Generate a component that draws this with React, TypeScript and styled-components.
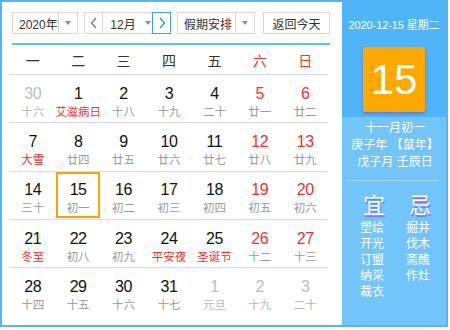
import styled, { createGlobalStyle } from 'styled-components';

const GlobalStyle = createGlobalStyle`
	html, body {
		margin: 0;
		padding: 0;
		background: #fff;
	}
	body {
		font-family: 'Liberation Sans', 'Noto Sans CJK SC', sans-serif;
	}
`;

type Day = {
	num: number;
	sub: string;
	other?: boolean;
	festival?: boolean;
	today?: boolean;
};

const d = (num: number, sub: string, extra: Partial<Day> = {}): Day => ({ num, sub, ...extra });

const weeks: Day[][] = [
	[d(30, '十六', { other: true }), d(1, '艾滋病日', { festival: true }), d(2, '十八'), d(3, '十九'), d(4, '二十'), d(5, '廿一'), d(6, '廿二')],
	[d(7, '大雪', { festival: true }), d(8, '廿四'), d(9, '廿五'), d(10, '廿六'), d(11, '廿七'), d(12, '廿八'), d(13, '廿九')],
	[d(14, '三十'), d(15, '初一', { today: true }), d(16, '初二'), d(17, '初三'), d(18, '初四'), d(19, '初五'), d(20, '初六')],
	[d(21, '冬至', { festival: true }), d(22, '初八'), d(23, '初九'), d(24, '平安夜', { festival: true }), d(25, '圣诞节', { festival: true }), d(26, '十二'), d(27, '十三')],
	[d(28, '十四'), d(29, '十五'), d(30, '十六'), d(31, '十七'), d(1, '元旦', { other: true }), d(2, '十九', { other: true }), d(3, '二十', { other: true })],
];

const weekdays = ['一', '二', '三', '四', '五', '六', '日'];
const goodList = ['塑绘', '开光', '订盟', '纳采', '裁衣'];
const badList = ['掘井', '伐木', '斋醮', '作灶'];

const Widget = styled.div`
	width: 448px;
	height: 327px;
	box-sizing: border-box;
	border: 2px solid #52b6f6;
	display: flex;
	background: #fff;
`;

const Main = styled.div`
	width: 340px;
	box-sizing: border-box;
	padding: 10px 10px 0 8px;
	display: flex;
	flex-direction: column;
`;

const Toolbar = styled.div`
	display: flex;
	align-items: center;
	height: 22px;
	margin-left: 2px;
	gap: 6px;
	font-size: 12px;
	color: #333;
	white-space: nowrap;
`;

const Select = styled.div<{ $width: number }>`
	width: ${(p) => p.$width}px;
	height: 22px;
	box-sizing: border-box;
	border: 1px solid #d8d8d8;
	display: flex;
	align-items: stretch;
	background: #fff;
`;

const SelectText = styled.span`
	flex: 1;
	display: flex;
	align-items: center;
	padding-left: 6px;
	white-space: nowrap;
`;

const Caret = styled.span`
	width: 18px;
	flex: none;
	border-left: 1px solid #d8d8d8;
	display: flex;
	align-items: center;
	justify-content: center;
	&::after {
		content: '';
		border-left: 3.5px solid transparent;
		border-right: 3.5px solid transparent;
		border-top: 4px solid #8a8a8a;
	}
`;

const MonthGroup = styled.div`
	display: flex;
	height: 22px;
`;

const NavBtn = styled.span<{ $active?: boolean }>`
	width: 19px;
	box-sizing: border-box;
	border: 1px solid ${(p) => (p.$active ? '#3f9ff2' : '#d8d8d8')};
	display: flex;
	align-items: center;
	justify-content: center;
	color: ${(p) => (p.$active ? '#2b8ef0' : '#777')};
	background: #fff;
`;

const MonthSel = styled.span`
	width: 49px;
	box-sizing: border-box;
	border-top: 1px solid #d8d8d8;
	border-bottom: 1px solid #d8d8d8;
	display: flex;
	align-items: center;
	justify-content: center;
	gap: 9px;
	padding-left: 6px;
	&::after {
		content: '';
		border-left: 3.5px solid transparent;
		border-right: 3.5px solid transparent;
		border-top: 4px solid #8a8a8a;
	}
`;

const TodayBtn = styled.span`
	width: 67px;
	height: 22px;
	box-sizing: border-box;
	border: 1px solid #d8d8d8;
	display: flex;
	align-items: center;
	justify-content: center;
	margin-left: 2px;
`;

const BlueRule = styled.div`
	height: 2px;
	background: #5cbcf7;
	margin: 9px 2px 0 2px;
`;

const Grid = styled.div`
	display: grid;
	grid-template-columns: repeat(7, 1fr);
	width: 318px;
`;

const HeadCell = styled.div<{ $weekend?: boolean }>`
	height: 29px;
	border-bottom: 1px solid #dcdcdc;
	display: flex;
	align-items: center;
	justify-content: center;
	font-size: 14px;
	color: ${(p) => (p.$weekend ? '#f23030' : '#333')};
`;

const DayCell = styled.div<{ $last: boolean }>`
	height: ${(p) => (p.$last ? 48 : 47.3)}px;
	border-bottom: ${(p) => (p.$last ? 'none' : '1px solid #dcdcdc')};
	display: flex;
	align-items: center;
	justify-content: center;
`;

const DayBox = styled.div<{ $today?: boolean }>`
	width: 44px;
	height: 46px;
	box-sizing: border-box;
	border: 2px solid ${(p) => (p.$today ? '#ffa200' : 'transparent')};
	display: flex;
	flex-direction: column;
	align-items: center;
	padding-top: 6px;
`;

const DayNum = styled.span<{ $color: string }>`
	font-size: 16px;
	line-height: 20px;
	letter-spacing: -0.4px;
	color: ${(p) => p.$color};
`;

const DaySub = styled.span<{ $color: string }>`
	font-size: 11.5px;
	line-height: 16px;
	color: ${(p) => p.$color};
	white-space: nowrap;
`;

const Side = styled.div`
	flex: 1;
	display: flex;
	flex-direction: column;
	color: #fff;
	background: #72c4f9;
`;

const SideTop = styled.div`
	height: 115px;
	background: #4fb5f6;
	display: flex;
	flex-direction: column;
	align-items: center;
	padding-top: 16px;
	box-sizing: border-box;
`;

const DateLine = styled.div`
	font-size: 11px;
	line-height: 14px;
	letter-spacing: -0.1px;
	white-space: nowrap;
`;

const BigDay = styled.div`
	width: 62px;
	height: 65px;
	margin-top: 15px;
	background: #ffa800;
	border-radius: 2px;
	box-shadow: 0 2px 3px rgba(95, 80, 210, 0.55);
	display: flex;
	align-items: center;
	justify-content: center;
	font-size: 42px;
	font-family: 'Liberation Sans', Arial, sans-serif;
`;

const Lunar = styled.div`
	display: flex;
	flex-direction: column;
	align-items: center;
	font-size: 12px;
	line-height: 17px;
	padding-top: 3px;
	margin-left: 2px;
`;

const Divider = styled.div`
	height: 1px;
	background: #a4d9fb;
	margin: 9px 7px 0 5px;
`;

const Advice = styled.div`
	display: grid;
	grid-template-columns: 46px 1fr;
	padding: 12px 0 0 18px;
`;

const AdviceCol = styled.div`
	display: flex;
	flex-direction: column;
`;

const AdviceHead = styled.div`
	font-size: 22px;
	line-height: 26px;
	text-shadow: 1px 2px 0 #7a7cf2;
	margin-left: 3px;
	margin-bottom: 1px;
`;

const AdviceItem = styled.div`
	font-size: 12px;
	line-height: 16px;
`;

const Chevron = ({ dir }: { dir: 'left' | 'right' }) => (
	<svg width="8" height="12" viewBox="0 0 8 12">
		<polyline
			points={dir === 'left' ? '6,1 1.5,6 6,11' : '2,1 6.5,6 2,11'}
			fill="none"
			stroke="currentColor"
			strokeWidth="1.3"
		/>
	</svg>
);

const numColor = (day: Day, col: number) => {
	if (day.other) return '#bdbdbd';
	if (col >= 5) return '#f23030';
	return '#111';
};

const subColor = (day: Day) => {
	if (day.other) return '#b8b8b8';
	if (day.festival) return '#f23030';
	return '#999';
};

export default function App() {
	return (
		<>
			<GlobalStyle />
			<Widget>
				<Main>
					<Toolbar>
						<Select $width={66}>
							<SelectText>2020年</SelectText>
							<Caret />
						</Select>
						<MonthGroup>
							<NavBtn>
								<Chevron dir="left" />
							</NavBtn>
							<MonthSel>12月</MonthSel>
							<NavBtn $active>
								<Chevron dir="right" />
							</NavBtn>
						</MonthGroup>
						<Select $width={78}>
							<SelectText>假期安排</SelectText>
							<Caret />
						</Select>
						<TodayBtn>返回今天</TodayBtn>
					</Toolbar>
					<BlueRule />
					<Grid>
						{weekdays.map((w, i) => (
							<HeadCell key={w} $weekend={i >= 5}>
								{w}
							</HeadCell>
						))}
						{weeks.map((week, r) =>
							week.map((day, c) => (
								<DayCell key={`${r}-${c}`} $last={r === weeks.length - 1}>
									<DayBox $today={day.today}>
										<DayNum $color={numColor(day, c)}>{day.num}</DayNum>
										<DaySub $color={subColor(day)}>{day.sub}</DaySub>
									</DayBox>
								</DayCell>
							))
						)}
					</Grid>
				</Main>
				<Side>
					<SideTop>
						<DateLine>2020-12-15 星期二</DateLine>
						<BigDay>15</BigDay>
					</SideTop>
					<Lunar>
						<span>十一月初一</span>
						<span>庚子年 【鼠年】</span>
						<span>戊子月 壬辰日</span>
					</Lunar>
					<Divider />
					<Advice>
						<AdviceCol>
							<AdviceHead>宜</AdviceHead>
							{goodList.map((g) => (
								<AdviceItem key={g}>{g}</AdviceItem>
							))}
						</AdviceCol>
						<AdviceCol>
							<AdviceHead>忌</AdviceHead>
							{badList.map((b) => (
								<AdviceItem key={b}>{b}</AdviceItem>
							))}
						</AdviceCol>
					</Advice>
				</Side>
			</Widget>
		</>
	);
}
